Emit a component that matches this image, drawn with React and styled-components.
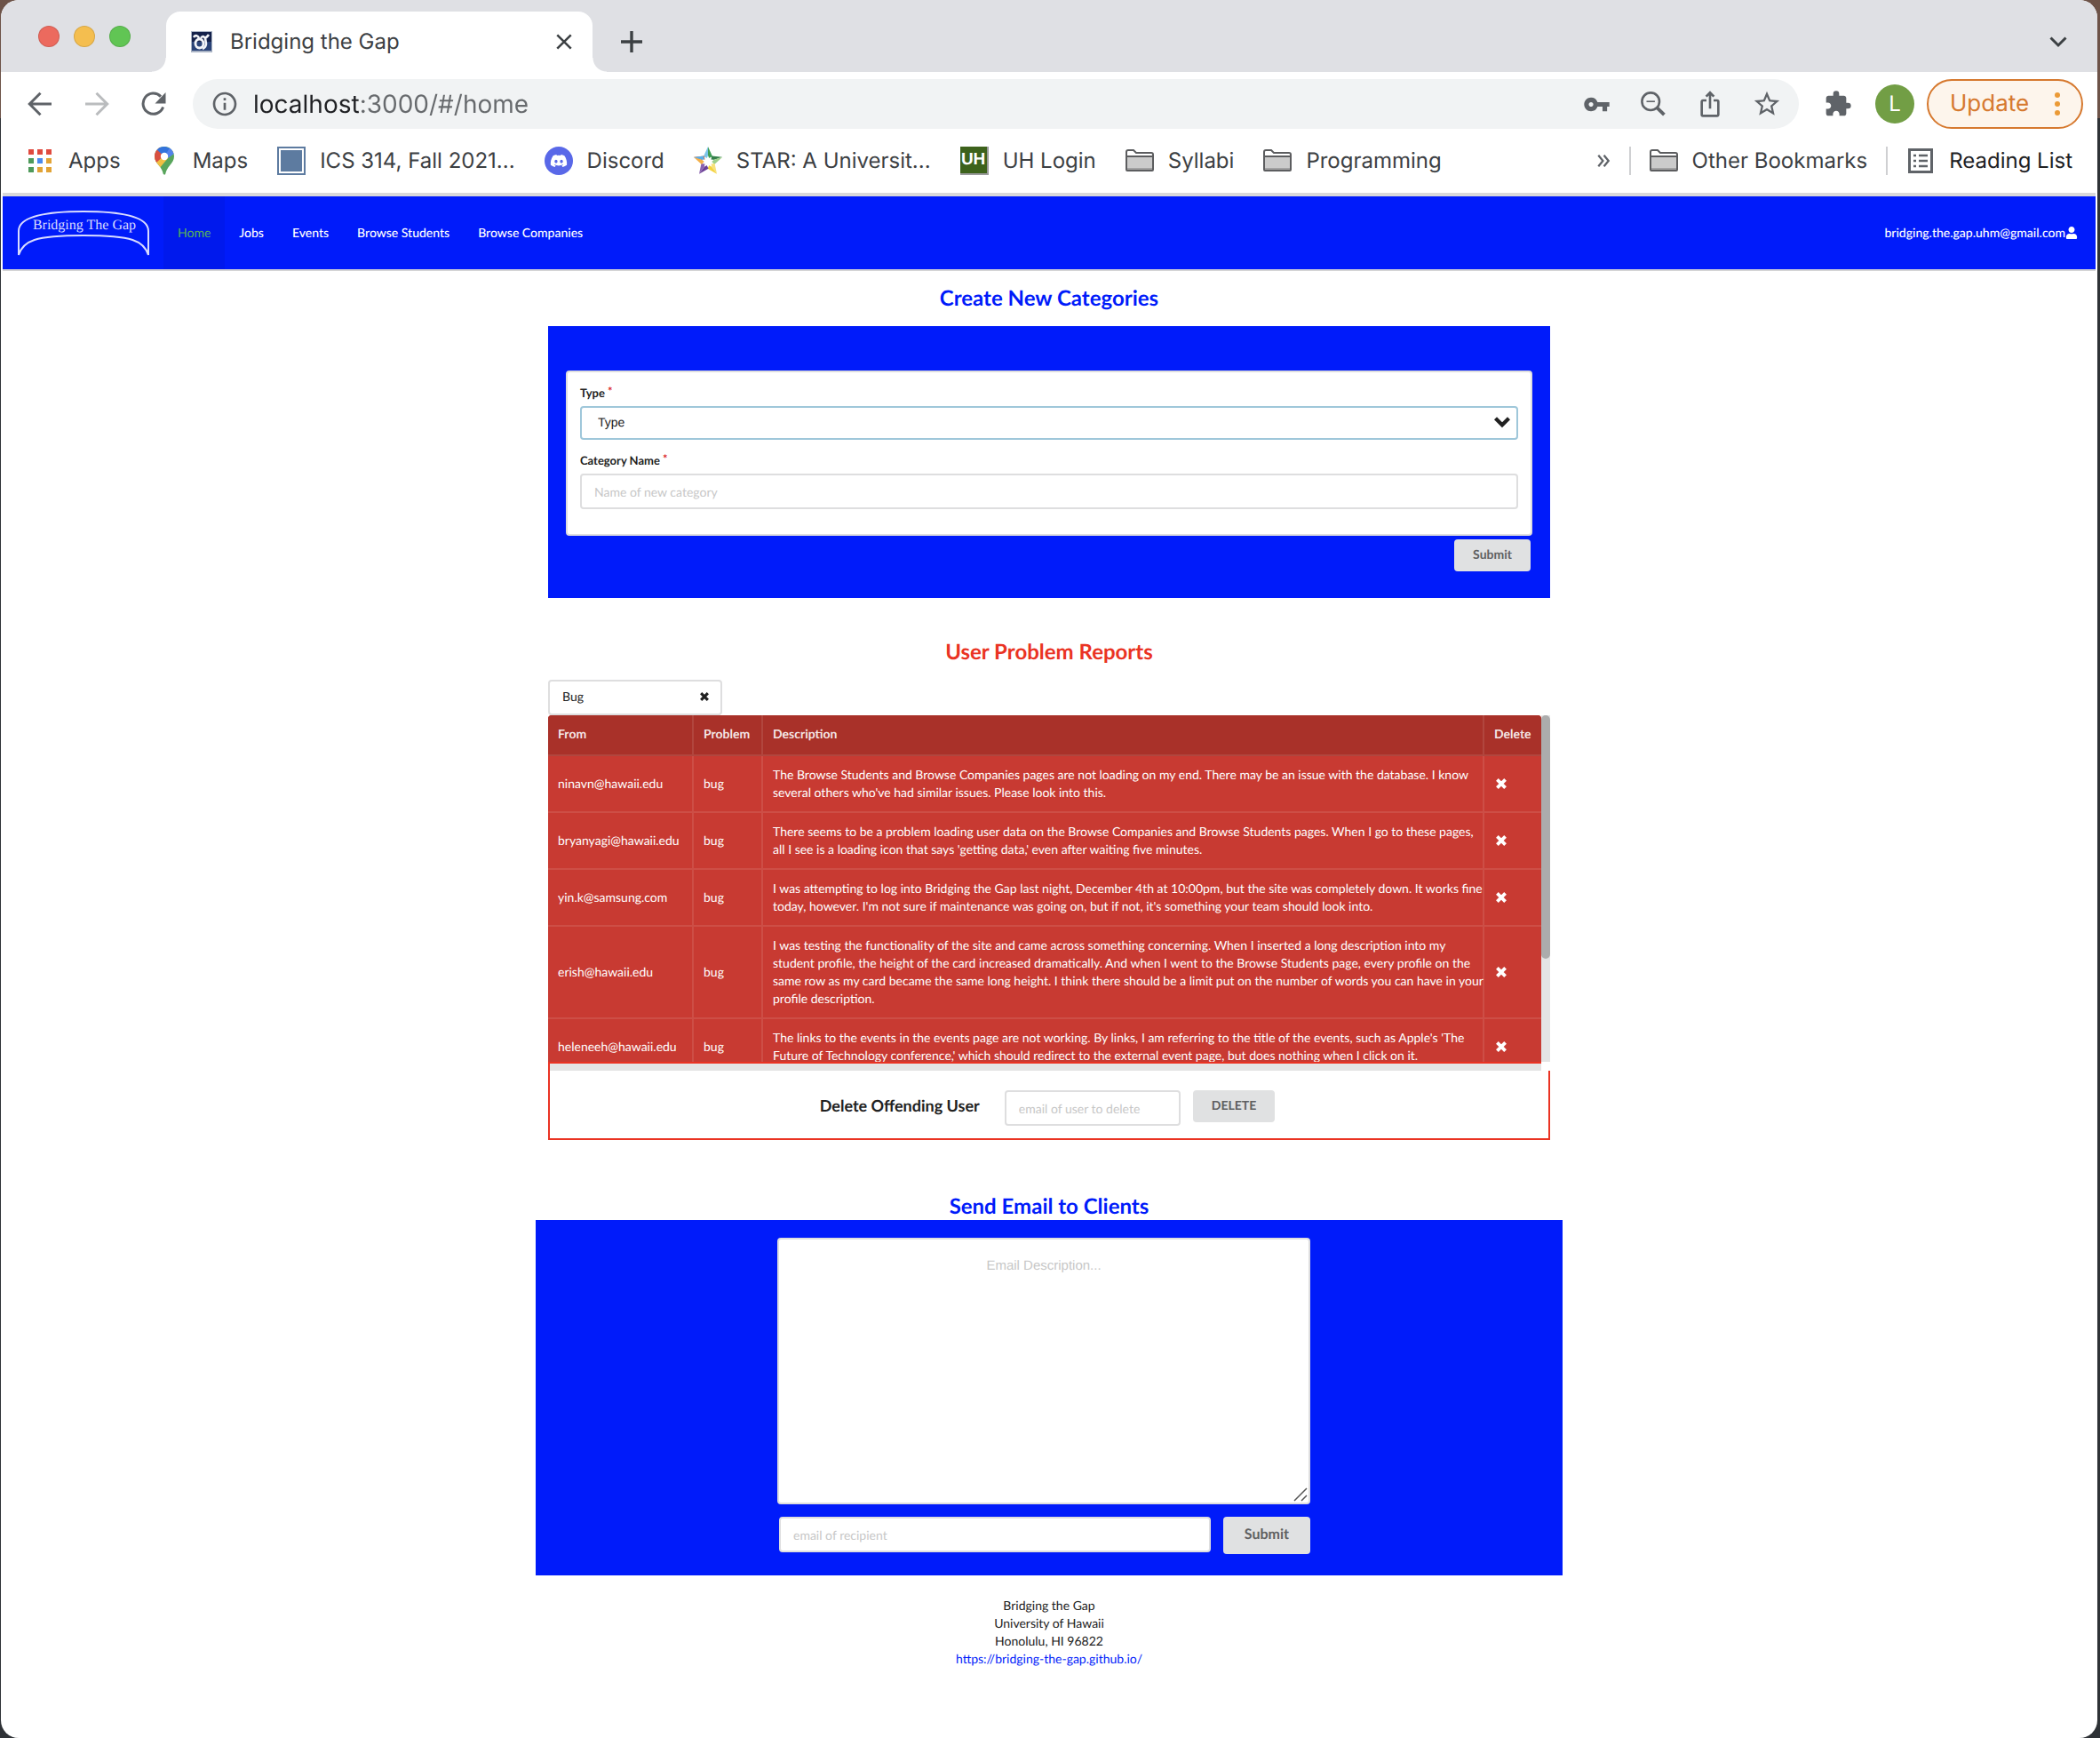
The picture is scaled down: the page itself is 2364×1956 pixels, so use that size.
import React from "react";
import styled, { createGlobalStyle, css } from "styled-components";
import { MdIosShare, MdStarBorder, MdExtension, MdVpnKey, MdInfoOutline } from "react-icons/md";
import { FaDiscord, FaUser } from "react-icons/fa";

const blue = "#001bfa";
const red = "#ea3323";
const line = "#dededf";
const ink = "#212121";
const lato = `Lato, "Open Sans", sans-serif`;
const ui = `Inter, Roboto, sans-serif`;
const arial = `"Liberation Sans", Arial, sans-serif`;

const GlobalStyle = createGlobalStyle`
  *, *::before, *::after { box-sizing: border-box; text-rendering: geometricPrecision; }
  html { background: linear-gradient(#6d5348 0 133px, #2e3236 133px); }
  body { margin: 0; padding: 0 3px 0 1px; font-family: ${lato}; font-size: 14px; line-height: 20px; color: ${ink}; }
  button, input, select, textarea { font: inherit; color: inherit; margin: 0; }
  a { color: inherit; text-decoration: none; }
`;

/* ---------- browser window ---------- */

const Window = styled.div`
  min-height: 100vh;
  background: #fff;
  border-radius: 20px;
  overflow: hidden;
`;

const TabStrip = styled.div`
  height: 81px;
  display: flex;
  align-items: flex-end;
  padding: 0 28px 0 42px;
  background: #dfe0e4;
  font-family: ${ui};
  color: #3c4043;
`;

const Lights = styled.div`
  display: flex;
  gap: 16px;
  align-self: center;
  margin-right: 40px;
`;

const Light = styled.span`
  width: 24px;
  height: 24px;
  border-radius: 50%;
  border: 1px solid rgba(0, 0, 0, 0.12);
  background: ${(p) => p.$color};
`;

const Tab = styled.div`
  position: relative;
  width: 480px;
  height: 68px;
  display: flex;
  align-items: center;
  padding: 0 20px 0 28px;
  gap: 20px;
  background: #fff;
  border-radius: 16px 16px 0 0;
  font-size: 24px;

  &::before,
  &::after {
    content: "";
    position: absolute;
    bottom: 0;
    width: 16px;
    height: 16px;
  }
  &::before {
    left: -16px;
    background: radial-gradient(circle at 0 0, transparent 15px, #fff 16px);
  }
  &::after {
    right: -16px;
    background: radial-gradient(circle at 100% 0, transparent 15px, #fff 16px);
  }
`;

const TabTitle = styled.span`
  flex: 1;
`;

const IconButton = styled.button`
  display: inline-flex;
  align-items: center;
  justify-content: center;
  flex: none;
  width: ${(p) => p.$size || 40}px;
  height: ${(p) => p.$size || 40}px;
  padding: 0;
  border: 0;
  background: none;
  color: ${(p) => p.$color || "#5f6368"};
`;

const StripButton = styled(IconButton)`
  height: 68px;
  margin-left: ${(p) => (p.$end ? "auto" : "28px")};
`;

const Toolbar = styled.div`
  display: flex;
  align-items: center;
  padding: 8px 16px 0 24px;
  font-family: ${ui};
`;

const NavButtons = styled.div`
  display: flex;
  gap: 24px;
  margin-right: 24px;
`;

const AddressBar = styled.div`
  flex: 1;
  height: 56px;
  display: flex;
  align-items: center;
  margin-right: 24px;
  padding: 0 16px 0 20px;
  border-radius: 28px;
  background: #f1f3f4;
`;

const AddressInput = styled.input`
  flex: 1;
  min-width: 0;
  margin-left: 16px;
  padding: 0;
  border: 0;
  outline: 0;
  font-size: 28px;
  line-height: 40px;
  background: linear-gradient(90deg, #202124 0 121px, #676a6d 121px);
  background-clip: text;
  -webkit-background-clip: text;
  -webkit-text-fill-color: transparent;
`;

const AddressTools = styled.div`
  display: flex;
  gap: 24px;
`;

const Avatar = styled.button`
  width: 44px;
  height: 44px;
  margin: 0 14px 0 22px;
  padding: 0;
  border: 0;
  border-radius: 50%;
  background: #729e45;
  color: #fff;
  font-size: 24px;
`;

const Update = styled.button`
  width: 176px;
  height: 56px;
  display: flex;
  align-items: center;
  justify-content: space-between;
  padding: 0 24px;
  border: 2px solid #d6792f;
  border-radius: 28px;
  background: #fdf5ec;
  color: #d6792f;
  font-size: 26px;
`;

const Bookmarks = styled.nav`
  height: 72px;
  display: flex;
  align-items: center;
  gap: 33px;
  padding: 0 28px;
  font-family: ${ui};
  font-size: 24px;
  line-height: 32px;
  color: #3c4043;
  white-space: nowrap;
`;

const Bookmark = styled.a`
  display: flex;
  align-items: center;
  gap: 16px;
  color: ${(p) => (p.$dark ? "#202124" : "inherit")};

  svg {
    flex: none;
  }
`;

const BookmarkEnd = styled.div`
  display: flex;
  align-items: center;
  gap: 21px;
  margin-left: auto;
`;

const Divider = styled.span`
  width: 2px;
  height: 32px;
  background: #cfd0d2;
`;

const UhMark = styled.span`
  width: 32px;
  height: 32px;
  border: solid #9a9b9c;
  border-width: 0 2px 2px 0;
  background: #3d621c;
  color: #fff;
  font-family: ${arial};
  font-size: 19px;
  font-weight: 700;
  line-height: 30px;
  text-align: center;
`;

const Page = styled.div`
  margin: 0 2px;
  border-top: 4px solid #d8d8d9;
`;

/* ---------- site ---------- */

const SiteNav = styled.nav`
  height: 84px;
  display: flex;
  align-items: stretch;
  padding: 0 4px 0 16px;
  border-bottom: 2px solid #d4d4d5;
  background: ${blue};
  color: #fff;
  font-weight: 500;
`;

const LogoLink = styled.a`
  display: flex;
  align-items: center;
  margin-right: 15px;
`;

const NavItem = styled.a`
  display: flex;
  align-items: center;
  padding: 0 16px;
  ${(p) =>
    p.$active &&
    css`
      color: #57b257;
      background: rgba(0, 0, 0, 0.05);
      font-weight: 400;
    `}
`;

const UserLink = styled(NavItem)`
  margin-left: auto;
`;

const Container = styled.section`
  width: 100%;
  max-width: ${(p) => (p.$wide ? 1156 : 1128)}px;
  margin: ${(p) => p.$top}px auto 0;
`;

const Heading = styled.h2`
  margin: 0 0 ${(p) => (p.$flush ? 0 : 16)}px;
  font-size: 24px;
  line-height: 30px;
  font-weight: 700;
  text-align: center;
  color: ${(p) => p.$color};
`;

const CreatePanel = styled.form`
  display: flex;
  flex-direction: column;
  padding: 50px 20px 30px;
  background: ${blue};
`;

const Segment = styled.div`
  padding: 14px;
  border: 2px solid ${line};
  border-radius: 4px;
  background: #fff;
`;

const Field = styled.div`
  margin-bottom: 14px;
`;

const Label = styled.label`
  display: block;
  height: 20px;
  margin-bottom: 4px;
  font-size: 13px;
  line-height: 18px;
  font-weight: 700;

  &::after {
    content: "*";
    margin-left: 3px;
    vertical-align: top;
    line-height: 14px;
    color: #db2828;
  }
`;

const control = css`
  border: 2px solid ${line};
  border-radius: 4px;
  background: #fff;
  outline: 0;

  &::placeholder {
    color: #c7c7c7;
    opacity: 1;
  }
`;

const TextInput = styled.input`
  ${control}
  width: ${(p) => p.$width || "100%"};
  height: 40px;
  padding: 0 14px;
`;

const SelectWrap = styled.div`
  position: relative;
  width: ${(p) => p.$width || "100%"};
`;

const Select = styled.select`
  ${control}
  display: block;
  appearance: none;
  width: 100%;
  height: ${(p) => (p.$focus ? 38 : 40)}px;
  padding: 0 ${(p) => (p.$focus ? 18 : 14)}px 2px;
  ${(p) =>
    p.$focus &&
    css`
      border-color: #9fc7da;
      font-family: ${arial};
    `}
`;

const SelectIcon = styled.span`
  position: absolute;
  top: 0;
  bottom: 0;
  right: ${(p) => p.$right}px;
  display: flex;
  align-items: center;
  padding-bottom: 2px;
  pointer-events: none;
`;

const Button = styled.button`
  height: ${(p) => (p.$large ? 42 : 36)}px;
  padding: 0 ${(p) => (p.$large ? 24 : 21)}px 2px;
  border: 0;
  border-radius: 4px;
  background: #e0e1e2;
  color: #5f6061;
  font-size: ${(p) => (p.$large ? 16 : 14)}px;
  font-weight: 700;
`;

const PanelSubmit = styled(Button)`
  align-self: flex-end;
  margin: 4px 2px 0;
`;

const TableScroller = styled.div`
  height: 390px;
  display: grid;
  grid-template-columns: minmax(0, 1fr) 10px;
  align-items: start;
  overflow: hidden;
`;

const Table = styled.table`
  width: 100%;
  border-spacing: 0;
  table-layout: fixed;
  border-radius: 4px 4px 0 0;
  overflow: hidden;
  background: #c83a32;
  color: #fff;
`;

const Th = styled.th`
  width: ${(p) => p.$width || "auto"};
  height: 46px;
  padding: 0 11px 2px;
  border-bottom: 2px solid rgba(255, 255, 255, 0.1);
  background: #a93129;
  color: rgba(255, 255, 255, 0.9);
  font-weight: 700;
  text-align: left;

  & + & {
    border-left: 2px solid rgba(255, 255, 255, 0.1);
  }
`;

const Td = styled.td`
  padding: 11px 0 11px 11px;
  border-bottom: 2px solid rgba(255, 255, 255, 0.1);
  white-space: pre;

  & + & {
    border-left: 2px solid rgba(255, 255, 255, 0.1);
  }
`;

const RowDelete = styled(IconButton)`
  display: flex;
`;

const ScrollTrack = styled.div`
  height: 390px;
  background: #e4e4e4;
`;

const ScrollThumb = styled.div`
  height: 274px;
  border-radius: 5px;
  background: #acacac;
`;

const DeleteForm = styled.form`
  position: relative;
  display: flex;
  justify-content: center;
  align-items: flex-start;
  gap: 14px;
  padding: 30px 4px 14px 0;
  border: 2px solid ${red};

  &::before,
  &::after {
    content: "";
    position: absolute;
  }
  &::before {
    top: -2px;
    right: -2px;
    width: 10px;
    height: 10px;
    background: #fff;
  }
  &::after {
    top: 0;
    left: 0;
    right: 8px;
    height: 8px;
    background: #e4e4e4;
  }
`;

const DeleteTitle = styled.label`
  margin-right: 14px;
  font-size: 18px;
  line-height: 34px;
  font-weight: 700;
`;

const EmailPanel = styled.form`
  padding: 20px 12px 24px 0;
  background: ${blue};
`;

const EmailBody = styled.div`
  max-width: 600px;
  margin: 0 auto;
`;

const MessageWrap = styled.div`
  position: relative;
  margin-bottom: 14px;
`;

const Message = styled.textarea`
  ${control}
  display: block;
  width: 100%;
  height: 300px;
  padding: 20px 14px;
  resize: none;
  font-family: ${arial};
  font-size: 15px;
  text-align: center;
`;

const Grip = styled.svg`
  position: absolute;
  right: 3px;
  bottom: 3px;
`;

const EmailRow = styled.div`
  display: flex;
  align-items: flex-start;
  gap: 14px;
  padding-left: 2px;
`;

const Footer = styled.footer`
  padding: 24px 0;
  text-align: center;
`;

const FooterLink = styled.a`
  color: ${blue};
`;

/* ---------- drawings ---------- */

const Stroke = ({ size = 28, d, width = 3 }) => (
  <svg width={size} height={size} viewBox="0 0 28 28" fill="none" stroke="currentColor" strokeWidth={width}>
    <path d={d} />
  </svg>
);

const Reload = () => (
  <svg width="28" height="28" viewBox="0 0 28 28">
    <path d="M24.6 17.6A11.6 11.6 0 1 1 22 5.6" fill="none" stroke="currentColor" strokeWidth="3" />
    <path d="M27.5 1v12.5h-12z" fill="currentColor" />
  </svg>
);

const ZoomOut = () => (
  <svg width="28" height="28" viewBox="0 0 28 28" fill="none" stroke="currentColor">
    <circle cx="11.2" cy="11.2" r="9.8" strokeWidth="2.6" />
    <path d="M6.5 11.2h9.4" strokeWidth="1.6" />
    <path d="M18.2 18.2l8.2 8" strokeWidth="3.8" />
  </svg>
);

const TabIcon = () => (
  <svg width="24" height="24" viewBox="0 0 24 24">
    <rect width="24" height="24" fill="#a9b3c4" />
    <rect x="1" y="1" width="22" height="11" fill="#14214a" />
    <rect x="1" y="12" width="22" height="10" fill="#2a4377" />
    <ellipse cx="9.500" cy="14" rx="4.500" ry="5" fill="none" stroke="#f2f4f8" strokeWidth="2.800" />
    <path d="M3 7c2-3 5-2 6 1M11 8c2-3 3-2 4-1s3 0 5-3M16 8l1 6c0 3-2 5-4 6" fill="none" stroke="#f2f4f8" strokeWidth="2.600" />
  </svg>
);

const AppsIcon = () => {
  const colors = ["#e04a3f", "#e04a3f", "#e04a3f", "#4f9a5b", "#4a8af0", "#e2a336", "#4f9a5b", "#e2a336", "#e2a336"];
  return (
    <svg width="32" height="32" viewBox="0 0 32 32">
      {colors.map((c, i) => (
        <rect key={i} x={3 + (i % 3) * 10} y={3 + Math.floor(i / 3) * 10} width="6" height="6" fill={c} />
      ))}
    </svg>
  );
};

const MapsIcon = () => (
  <svg width="32" height="32" viewBox="0 0 32 32">
    <clipPath id="pin">
      <path d="M16 0C9.800 0 5 4.900 5 11c0 4 2 6.800 4.500 9.800C12.500 24.500 14 27 14.700 30.500c.3 1.600 2.300 1.600 2.600 0C18 27 19.500 24.500 22.500 20.800 25 17.800 27 15 27 11 27 4.900 22.200 0 16 0z" />
    </clipPath>
    <g clipPath="url(#pin)">
      <rect width="32" height="32" fill="#58a55c" />
      <path d="M27 5L9 26 0 17 16 4z" fill="#f1bf42" />
      <path d="M0 0h10l8 8L7 18 0 16z" fill="#d95040" />
      <path d="M7 3L16 11 25 3 18 0H9z" fill="#3373dc" />
      <path d="M16 11L22 1.500 30 6 20 13z" fill="#5383ec" />
    </g>
    <circle cx="16" cy="11" r="4.200" fill="#fff" />
  </svg>
);

const SquareIcon = () => (
  <svg width="32" height="32" viewBox="0 0 32 32">
    <rect width="32" height="32" fill="#5d7ba0" />
    <rect x="3" y="3" width="26" height="26" fill="none" stroke="#fff" strokeWidth="2" />
  </svg>
);

const DiscordIcon = () => (
  <svg width="32" height="32" viewBox="0 0 32 32">
    <circle cx="16" cy="16" r="16" fill="#5968e8" />
    <FaDiscord x="6" y="6" size={20} color="#fff" />
  </svg>
);

const StarIcon = () => {
  const arms = [
    ["#7cc4e8", "#3f9e55"],
    ["#35804a", "#9fd08a"],
    ["#f7e27a", "#f4d23e"],
    ["#6b3f96", "#8a62b0"],
    ["#f4b04a", "#e0662f"],
  ];
  return (
    <svg width="32" height="32" viewBox="0 0 32 32">
      {arms.map(([a, b], i) => (
        <g key={i} transform={`rotate(${i * 72} 16 17)`}>
          <path d="M16 0l-5 11 5 2.500z" fill={a} />
          <path d="M16 0l5 11-5 2.500z" fill={b} />
        </g>
      ))}
      <path d="M0 12l11-1.500 1 5z" fill="#58aee8" />
      <path d="M16 10l1.900 4.400 4.800.4-3.600 3.200 1.100 4.700L16 20.200l-4.200 2.500 1.100-4.700-3.600-3.200 4.800-.4z" fill="#fff" />
    </svg>
  );
};

const FolderIcon = () => (
  <svg width="32" height="32" viewBox="0 0 32 32">
    <path d="M1 26V6q0-2 2-2h6l3 3h17q2 0 2 2v17q0 1-1 1H2q-1 0-1-1z" fill="#fff" stroke="#5c5d5f" strokeWidth="2" />
    <rect x="2" y="12" width="28" height="14" fill="#cbcbcb" />
    <path d="M1 11h30" stroke="#5c5d5f" strokeWidth="2" />
    <path d="M2 25h28" stroke="#a2a2a3" strokeWidth="2" />
  </svg>
);

const ReadingIcon = () => (
  <svg width="32" height="32" viewBox="-2 -2 32 32" fill="none" stroke="#5f6368">
    <rect x="1.500" y="1.500" width="25" height="25" strokeWidth="3" />
    <path d="M6 8h3M6 14h3M6 20h3M12 8h10M12 14h10M12 20h10" strokeWidth="2.600" />
  </svg>
);

const Cross = ({ size = 12 }) => (
  <svg width={size} height={size} viewBox="0 0 12 12" stroke="currentColor" strokeWidth="3.800">
    <path d="M1.400 1.400l9.200 9.200M10.600 1.400l-9.200 9.200" />
  </svg>
);

const Logo = () => (
  <svg width="150" height="56" viewBox="0 0 150 56" fill="none" stroke="#d9dcff" strokeWidth="2">
    <path d="M2 53V26Q2 4 75 4T148 26V53C143 37 130 31 75 31S7 37 2 53z" />
    <text x="76" y="24" textAnchor="middle" fill="#d9dcff" stroke="none" fontFamily="Liberation Serif, serif" fontSize="16">
      Bridging The Gap
    </text>
  </svg>
);

/* ---------- data ---------- */

const reports = [
  {
    from: "ninavn@hawaii.edu",
    text: `The Browse Students and Browse Companies pages are not loading on my end. There may be an issue with the database. I know
several others who've had similar issues. Please look into this.`,
  },
  {
    from: "bryanyagi@hawaii.edu",
    text: `There seems to be a problem loading user data on the Browse Companies and Browse Students pages. When I go to these pages,
all I see is a loading icon that says 'getting data,' even after waiting five minutes.`,
  },
  {
    from: "yin.k@samsung.com",
    text: `I was attempting to log into Bridging the Gap last night, December 4th at 10:00pm, but the site was completely down. It works fine
today, however. I'm not sure if maintenance was going on, but if not, it's something your team should look into.`,
  },
  {
    from: "erish@hawaii.edu",
    text: `I was testing the functionality of the site and came across something concerning. When I inserted a long description into my
student profile, the height of the card increased dramatically. And when I went to the Browse Students page, every profile on the
same row as my card became the same long height. I think there should be a limit put on the number of words you can have in your
profile description.`,
  },
  {
    from: "heleneeh@hawaii.edu",
    text: `The links to the events in the events page are not working. By links, I am referring to the title of the events, such as Apple's 'The
Future of Technology conference,' which should redirect to the external event page, but does nothing when I click on it.`,
  },
];

const bookmarks = [
  ["Apps", <AppsIcon />],
  ["Maps", <MapsIcon />],
  ["ICS 314, Fall 2021...", <SquareIcon />],
  ["Discord", <DiscordIcon />],
  ["STAR: A Universit...", <StarIcon />],
  ["UH Login", <UhMark>UH</UhMark>],
  ["Syllabi", <FolderIcon />],
  ["Programming", <FolderIcon />],
];

const BrowserChrome = () => (
  <header>
    <TabStrip>
      <Lights>
        <Light $color="#ec6a5e" />
        <Light $color="#f4be4f" />
        <Light $color="#61c554" />
      </Lights>
      <Tab>
        <TabIcon />
        <TabTitle>Bridging the Gap</TabTitle>
        <IconButton $size={24} $color="#3c4043" aria-label="Close tab">
          <Stroke size={24} d="M5 5l18 18M23 5L5 23" />
        </IconButton>
      </Tab>
      <StripButton $size={32} $color="#3c4043" aria-label="New tab">
        <Stroke d="M14 2v24M2 14h24" width={3.4} />
      </StripButton>
      <StripButton $size={32} $end $color="#3c4043" aria-label="Search tabs">
        <Stroke d="M5.500 9.500l8.500 8.500 8.500-8.500" />
      </StripButton>
    </TabStrip>
    <Toolbar>
      <NavButtons>
        <IconButton aria-label="Back">
          <Stroke d="M27 14H2.500M14.500 1.700L2.300 14l12.200 12.300" />
        </IconButton>
        <IconButton $color="#babcbe" aria-label="Forward">
          <Stroke d="M1 14h24.500M13.500 1.700L25.700 14 13.500 26.300" />
        </IconButton>
        <IconButton aria-label="Reload">
          <Reload />
        </IconButton>
      </NavButtons>
      <AddressBar>
        <MdInfoOutline size={32} color="#5f6368" />
        <AddressInput aria-label="Address" defaultValue="localhost:3000/#/home" />
        <AddressTools>
          <IconButton aria-label="Passwords">
            <MdVpnKey size={31} />
          </IconButton>
          <IconButton aria-label="Zoom">
            <ZoomOut />
          </IconButton>
          <IconButton aria-label="Share">
            <MdIosShare size={32} />
          </IconButton>
          <IconButton aria-label="Bookmark this page">
            <MdStarBorder size={34} />
          </IconButton>
        </AddressTools>
      </AddressBar>
      <IconButton aria-label="Extensions">
        <MdExtension size={32} />
      </IconButton>
      <Avatar>L</Avatar>
      <Update>
        Update
        <svg width="6" height="28" viewBox="0 0 6 28" fill="#eb9a36">
          <circle cx="3" cy="4" r="3" />
          <circle cx="3" cy="14" r="3" />
          <circle cx="3" cy="24" r="3" />
        </svg>
      </Update>
    </Toolbar>
    <Bookmarks>
      {bookmarks.map(([name, icon]) => (
        <Bookmark key={name} href="#">
          {icon}
          {name}
        </Bookmark>
      ))}
      <BookmarkEnd>
        <IconButton $size={16} aria-label="More bookmarks">
          <Stroke size={16} d="M4 3l9 11-9 11M15 3l9 11-9 11" width={4} />
        </IconButton>
        <Divider />
        <Bookmark href="#">
          <FolderIcon />
          Other Bookmarks
        </Bookmark>
        <Divider />
        <Bookmark href="#" $dark>
          <ReadingIcon />
          Reading List
        </Bookmark>
      </BookmarkEnd>
    </Bookmarks>
  </header>
);

export default function App() {
  return (
    <>
      <GlobalStyle />
      <Window>
        <BrowserChrome />
        <Page>
          <SiteNav>
            <LogoLink href="#" aria-label="Bridging The Gap">
              <Logo />
            </LogoLink>
            <NavItem href="#" $active>Home</NavItem>
            <NavItem href="#">Jobs</NavItem>
            <NavItem href="#">Events</NavItem>
            <NavItem href="#">Browse Students</NavItem>
            <NavItem href="#">Browse Companies</NavItem>
            <UserLink href="#">
              bridging.the.gap.uhm@gmail.com
              <FaUser size={14} />
            </UserLink>
          </SiteNav>

          <main>
            <Container $top={16}>
              <Heading $color={blue}>Create New Categories</Heading>
              <CreatePanel>
                <Segment>
                  <Field>
                    <Label htmlFor="type">Type</Label>
                    <SelectWrap>
                      <Select id="type" $focus>
                        <option>Type</option>
                      </Select>
                      <SelectIcon $right={8}>
                        <Stroke size={20} d="M3.500 8l10.500 10.500L24.500 8" width={6} />
                      </SelectIcon>
                    </SelectWrap>
                  </Field>
                  <Field>
                    <Label htmlFor="category">Category Name</Label>
                    <TextInput id="category" placeholder="Name of new category" />
                  </Field>
                </Segment>
                <PanelSubmit type="button">Submit</PanelSubmit>
              </CreatePanel>
            </Container>

            <Container $top={46}>
              <Heading $color={red}>User Problem Reports</Heading>
              <SelectWrap $width="196px">
                <Select aria-label="Problem type">
                  <option>Bug</option>
                </Select>
                <SelectIcon $right={15}>
                  <Cross size={10} />
                </SelectIcon>
              </SelectWrap>
              <TableScroller>
                <Table>
                  <thead>
                    <tr>
                      <Th $width="162px">From</Th>
                      <Th $width="78px">Problem</Th>
                      <Th>Description</Th>
                      <Th $width="66px">Delete</Th>
                    </tr>
                  </thead>
                  <tbody>
                    {reports.map((r) => (
                      <tr key={r.from}>
                        <Td>{r.from}</Td>
                        <Td>bug</Td>
                        <Td>{r.text}</Td>
                        <Td>
                          <RowDelete $size={16} $color="#fff" aria-label={`Delete report from ${r.from}`}>
                            <Cross />
                          </RowDelete>
                        </Td>
                      </tr>
                    ))}
                  </tbody>
                </Table>
                <ScrollTrack>
                  <ScrollThumb />
                </ScrollTrack>
              </TableScroller>
              <DeleteForm>
                <DeleteTitle htmlFor="offender">Delete Offending User</DeleteTitle>
                <TextInput id="offender" $width="198px" placeholder="email of user to delete" />
                <Button type="button">DELETE</Button>
              </DeleteForm>
            </Container>

            <Container $top={60} $wide>
              <Heading $color={blue} $flush>Send Email to Clients</Heading>
              <EmailPanel>
                <EmailBody>
                  <MessageWrap>
                    <Message aria-label="Email description" placeholder="Email Description..." />
                    <Grip width="16" height="16" viewBox="0 0 16 16" stroke="#555" strokeWidth="1.500">
                      <path d="M1 15L15 1M9 15l6-6" />
                    </Grip>
                  </MessageWrap>
                  <EmailRow>
                    <TextInput aria-label="Recipient" placeholder="email of recipient" />
                    <Button type="button" $large>Submit</Button>
                  </EmailRow>
                </EmailBody>
              </EmailPanel>
            </Container>
          </main>

          <Footer>
            <div>Bridging the Gap</div>
            <div>University of Hawaii</div>
            <div>Honolulu, HI 96822</div>
            <FooterLink href="https://bridging-the-gap.github.io/">https://bridging-the-gap.github.io/</FooterLink>
          </Footer>
        </Page>
      </Window>
    </>
  );
}
